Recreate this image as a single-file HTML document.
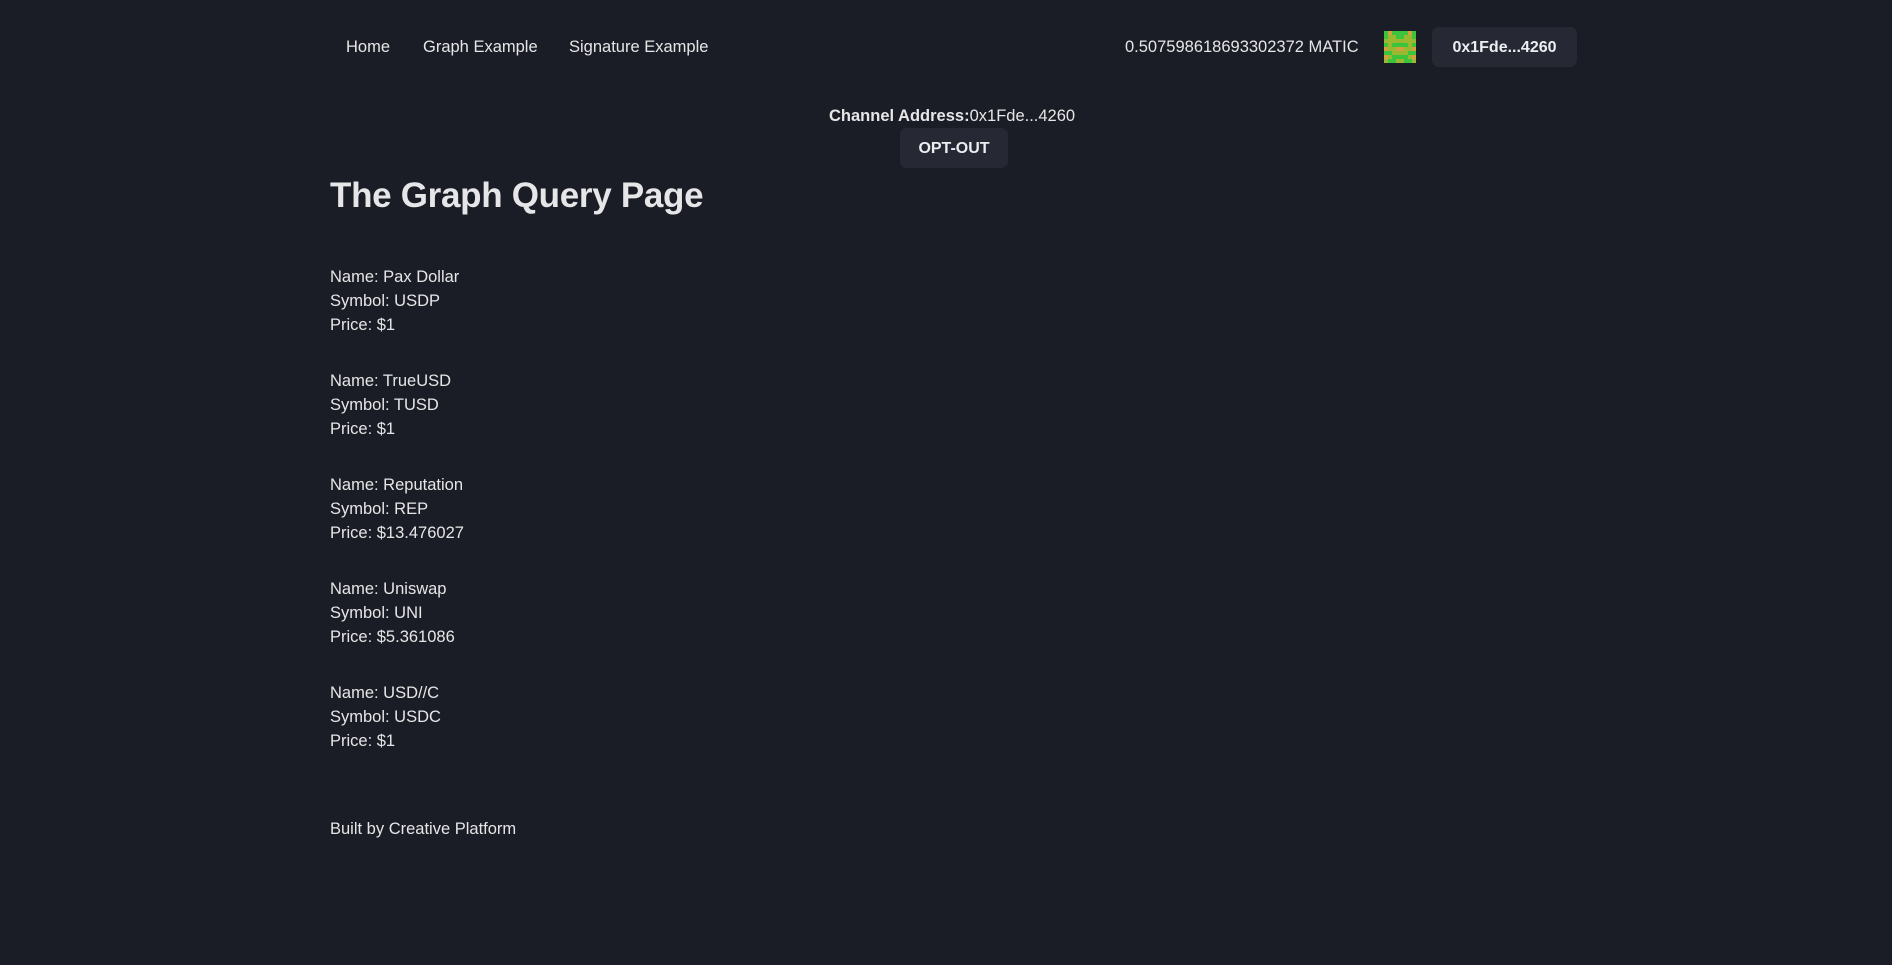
<!DOCTYPE html>
<html><head><meta charset="utf-8"><style>
*{margin:0;padding:0;box-sizing:border-box}
body{width:1892px;height:965px;background:#1a1d25;color:#e6e6e8;font-family:"Liberation Sans",sans-serif;position:relative;overflow:hidden}
.a{position:absolute;white-space:nowrap}
.nav{font-size:16.5px;top:38px}
.btn{position:absolute;background:#262933;border-radius:7px;font-weight:bold;font-size:16px;display:flex;align-items:center;justify-content:center;color:#eceef2;padding-top:1px}
.item{position:absolute;left:330px;font-size:16.5px;line-height:24px}
.av{position:absolute;left:1384px;top:31px;width:32px;height:32px;display:grid;grid-template-columns:repeat(8,4px)}
.av i{width:4px;height:4px;display:block}
.G{background:#3cc43c}.O{background:#d4a040}.Y{background:#9ab830}
</style></head><body>
<div class="a nav" style="left:346px">Home</div>
<div class="a nav" style="left:423px">Graph Example</div>
<div class="a nav" style="left:569px">Signature Example</div>
<div class="a nav" style="left:1125px">0.507598618693302372 MATIC</div>
<div class="av">
<i class="G"></i><i class="O"></i><i class="G"></i><i class="G"></i><i class="G"></i><i class="G"></i><i class="O"></i><i class="G"></i>
<i class="G"></i><i class="Y"></i><i class="Y"></i><i class="G"></i><i class="G"></i><i class="Y"></i><i class="Y"></i><i class="G"></i>
<i class="Y"></i><i class="Y"></i><i class="Y"></i><i class="Y"></i><i class="Y"></i><i class="Y"></i><i class="Y"></i><i class="Y"></i>
<i class="G"></i><i class="Y"></i><i class="G"></i><i class="G"></i><i class="G"></i><i class="G"></i><i class="Y"></i><i class="G"></i>
<i class="O"></i><i class="Y"></i><i class="Y"></i><i class="O"></i><i class="O"></i><i class="Y"></i><i class="Y"></i><i class="O"></i>
<i class="G"></i><i class="G"></i><i class="Y"></i><i class="Y"></i><i class="Y"></i><i class="Y"></i><i class="G"></i><i class="G"></i>
<i class="O"></i><i class="Y"></i><i class="G"></i><i class="G"></i><i class="G"></i><i class="G"></i><i class="Y"></i><i class="O"></i>
<i class="Y"></i><i class="G"></i><i class="G"></i><i class="Y"></i><i class="Y"></i><i class="G"></i><i class="G"></i><i class="Y"></i>
</div>
<div class="btn" style="left:1432px;top:27px;width:145px;height:40px">0x1Fde...4260</div>
<div class="a" style="left:829px;top:107px;font-size:16.5px"><b>Channel Address:</b>0x1Fde...4260</div>
<div class="btn" style="left:900px;top:128px;width:108px;height:40px">OPT-OUT</div>
<div class="a" style="left:330px;top:176px;font-size:35px;font-weight:bold;letter-spacing:-0.3px">The Graph Query Page</div>
<div class="item" style="top:265px">Name: Pax Dollar<br>Symbol: USDP<br>Price: $1</div>
<div class="item" style="top:369px">Name: TrueUSD<br>Symbol: TUSD<br>Price: $1</div>
<div class="item" style="top:473px">Name: Reputation<br>Symbol: REP<br>Price: $13.476027</div>
<div class="item" style="top:577px">Name: Uniswap<br>Symbol: UNI<br>Price: $5.361086</div>
<div class="item" style="top:681px">Name: USD//C<br>Symbol: USDC<br>Price: $1</div>
<div class="item" style="top:817px">Built by Creative Platform</div>
</body></html>
